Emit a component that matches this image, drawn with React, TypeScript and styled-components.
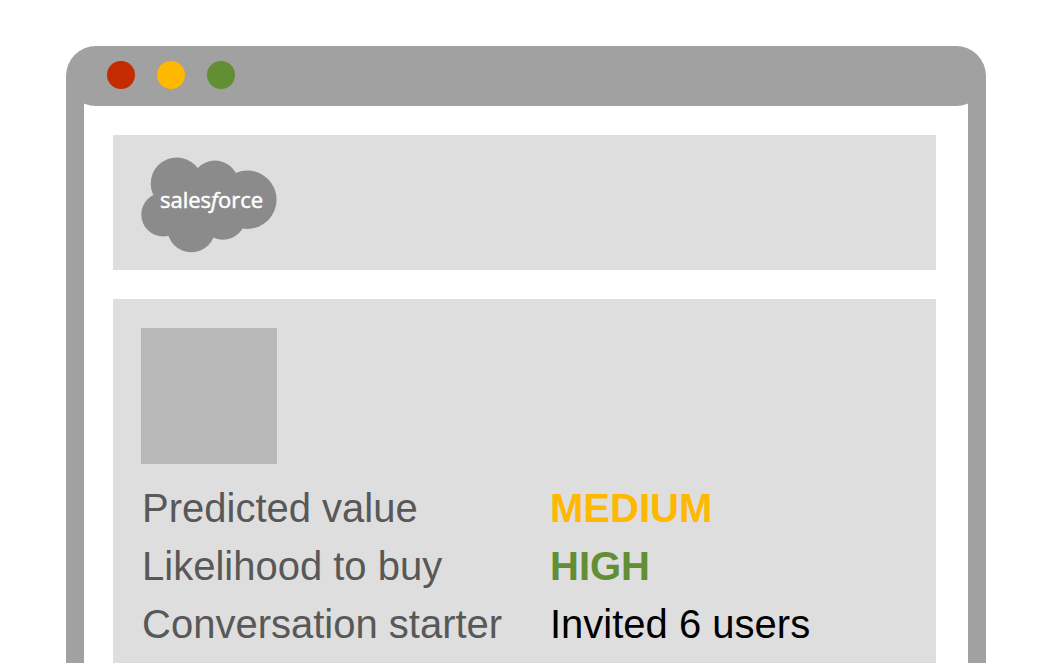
import React from "react";
import styled, { createGlobalStyle } from "styled-components";

const GlobalStyle = createGlobalStyle`
  *, *::before, *::after { box-sizing: border-box; }
  html, body, #root { height: 100%; }
  body {
    margin: 0;
    overflow: hidden;
    background: #ffffff;
    font-family: "Liberation Sans", Arial, Helvetica, sans-serif;
  }
`;

const colors = {
  frame: "#a1a1a1",
  panel: "#dedede",
  block: "#b9b9b9",
  cloud: "#8b8b8b",
  label: "#585858",
  red: "#c42b00",
  amber: "#ffb800",
  green: "#628e34",
  black: "#000000",
};

const Page = styled.div`
  display: flex;
  flex-direction: column;
  min-height: 100%;
  padding: 46px 63px 0 66px;
`;

const TitleBar = styled.header`
  position: relative;
  z-index: 1;
  display: flex;
  align-items: flex-start;
  gap: 22px;
  height: 60px;
  padding: 15px 41px;
  border-radius: 30px;
  background: ${colors.frame};
`;

const Dot = styled.span<{ $color: string }>`
  width: 28px;
  height: 28px;
  border-radius: 50%;
  background: ${({ $color }) => $color};
`;

const WindowBody = styled.main`
  flex: 1;
  display: flex;
  flex-direction: column;
  gap: 29px;
  margin-top: -30px;
  padding: 59px 32px 0 29px;
  border: solid ${colors.frame};
  border-width: 0 18px;
`;

const Panel = styled.section`
  padding: 22px 28px 17px;
  background: ${colors.panel};
`;

const RecordPanel = styled(Panel)`
  flex: 1;
  padding: 29px 28px;
`;

const Logo = styled.svg`
  display: block;
  width: 136px;
  height: 96px;
`;

const LogoText = styled.text`
  fill: #ffffff;
  stroke: #ffffff;
  stroke-width: 0.5;
  font-family: "Open Sans", "Noto Sans", sans-serif;
  font-size: 22px;
  font-weight: 500;
`;

const Avatar = styled.div`
  width: 136px;
  height: 136px;
  background: ${colors.block};
`;

const Facts = styled.dl`
  display: grid;
  grid-template-columns: 408px 1fr;
  margin: 15px 0 0;
  padding-left: 1px;
  font-size: 40px;
  line-height: 58px;
  white-space: nowrap;
`;

const Label = styled.dt`
  color: ${colors.label};
`;

const Value = styled.dd<{ $color: string; $bold?: boolean }>`
  margin: 0;
  color: ${({ $color }) => $color};
  font-weight: ${({ $bold }) => ($bold ? 700 : 400)};
`;

const facts = [
  { label: "Predicted value", value: "MEDIUM", color: colors.amber, bold: true },
  { label: "Likelihood to buy", value: "HIGH", color: colors.green, bold: true },
  { label: "Conversation starter", value: "Invited 6 users", color: colors.black, bold: false },
];

function SalesforceLogo() {
  return (
    <Logo viewBox="0 0 136 96" role="img" aria-label="salesforce">
      <g fill={colors.cloud}>
        <circle cx="35.7" cy="26.5" r="26" />
        <circle cx="74" cy="27.6" r="24" />
        <circle cx="106.4" cy="42.7" r="29.2" />
        <circle cx="82" cy="60" r="22.7" />
        <circle cx="50.3" cy="71.3" r="24" />
        <circle cx="22.3" cy="57.5" r="22" />
        <path d="M36 26H74L106 43 81 60 50 71 22 58Z" />
      </g>
      <LogoText x="19" y="51">
        sales<tspan fontStyle="italic">f</tspan>orce
      </LogoText>
    </Logo>
  );
}

export default function App() {
  return (
    <>
      <GlobalStyle />
      <Page>
        <TitleBar>
          <Dot $color={colors.red} />
          <Dot $color={colors.amber} />
          <Dot $color={colors.green} />
        </TitleBar>
        <WindowBody>
          <Panel>
            <SalesforceLogo />
          </Panel>
          <RecordPanel>
            <Avatar />
            <Facts>
              {facts.map((fact) => (
                <React.Fragment key={fact.label}>
                  <Label>{fact.label}</Label>
                  <Value $color={fact.color} $bold={fact.bold}>
                    {fact.value}
                  </Value>
                </React.Fragment>
              ))}
            </Facts>
          </RecordPanel>
        </WindowBody>
      </Page>
    </>
  );
}
